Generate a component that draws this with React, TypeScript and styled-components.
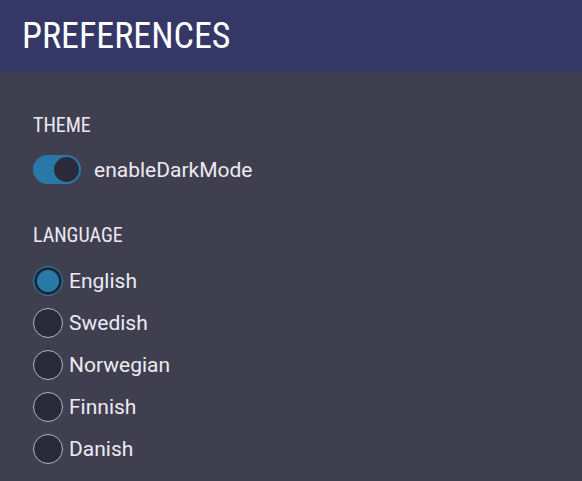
import { useState } from 'react'
import styled, { createGlobalStyle } from 'styled-components'

const GlobalStyle = createGlobalStyle`
    html, body {
        margin: 0;
        padding: 0;
        background: #403f4f;
        font-family: Roboto, "Noto Sans", sans-serif;
    }
`

const Page = styled.div`
    min-height: 100vh;
    background: #403f4f;
    color: #ecebf3;
`

const Header = styled.header`
    height: 72px;
    box-sizing: border-box;
    background: #353766;
    display: flex;
    align-items: center;
    padding: 0 22px;
`

const Title = styled.h1`
    margin: 0;
    font-family: "Roboto Condensed", Roboto, sans-serif;
    font-stretch: condensed;
    font-weight: 400;
    font-size: 36px;
    color: #ffffff;
`

const Content = styled.main`
    padding: 42px 33px 12px;
    display: flex;
    flex-direction: column;
    gap: 40px;
`

const Section = styled.section<{ $gap: number }>`
    display: flex;
    flex-direction: column;
    gap: ${p => p.$gap}px;
`

const SectionLabel = styled.h2`
    margin: 0;
    font-family: "Roboto Condensed", Roboto, sans-serif;
    font-stretch: condensed;
    font-weight: 400;
    font-size: 20px;
    line-height: 23px;
    color: #ecebf3;
`

const Row = styled.label<{ $gap: number }>`
    display: flex;
    align-items: center;
    gap: ${p => p.$gap}px;
    font-size: 21px;
    cursor: pointer;
`

const Track = styled.span<{ $on: boolean }>`
    width: 48px;
    height: 29px;
    border-radius: 15px;
    background: ${p => (p.$on ? '#2878a8' : '#6b6a7a')};
    display: flex;
    align-items: center;
    justify-content: ${p => (p.$on ? 'flex-end' : 'flex-start')};
    padding: 0 2px;
    box-sizing: border-box;
`

const Knob = styled.span`
    width: 25px;
    height: 25px;
    border-radius: 50%;
    background: #2a2a3a;
`

const RadioList = styled.div`
    display: flex;
    flex-direction: column;
    gap: 12px;
`

const Radio = styled.span<{ $checked: boolean }>`
    width: 30px;
    height: 30px;
    box-sizing: border-box;
    border-radius: 50%;
    border: 1px solid ${p => (p.$checked ? '#2a7fb2' : '#b4b4c0')};
    background: ${p => (p.$checked ? '#2878a8' : '#292939')};
    box-shadow: ${p => (p.$checked ? 'inset 0 0 0 3px #1f2536' : 'none')};
`

const languages = ['English', 'Swedish', 'Norwegian', 'Finnish', 'Danish']

const App = () => {
    const [darkMode, setDarkMode] = useState(true)
    const [language, setLanguage] = useState('English')

    return (
        <Page>
            <GlobalStyle />
            <Header>
                <Title>PREFERENCES</Title>
            </Header>
            <Content>
                <Section $gap={18}>
                    <SectionLabel>THEME</SectionLabel>
                    <Row $gap={13} onClick={() => setDarkMode(!darkMode)}>
                        <Track $on={darkMode}>
                            <Knob />
                        </Track>
                        enableDarkMode
                    </Row>
                </Section>
                <Section $gap={19}>
                    <SectionLabel>LANGUAGE</SectionLabel>
                    <RadioList>
                        {languages.map(lang => (
                            <Row key={lang} $gap={6} onClick={() => setLanguage(lang)}>
                                <Radio $checked={language === lang} />
                                {lang}
                            </Row>
                        ))}
                    </RadioList>
                </Section>
            </Content>
        </Page>
    )
}

export default App
